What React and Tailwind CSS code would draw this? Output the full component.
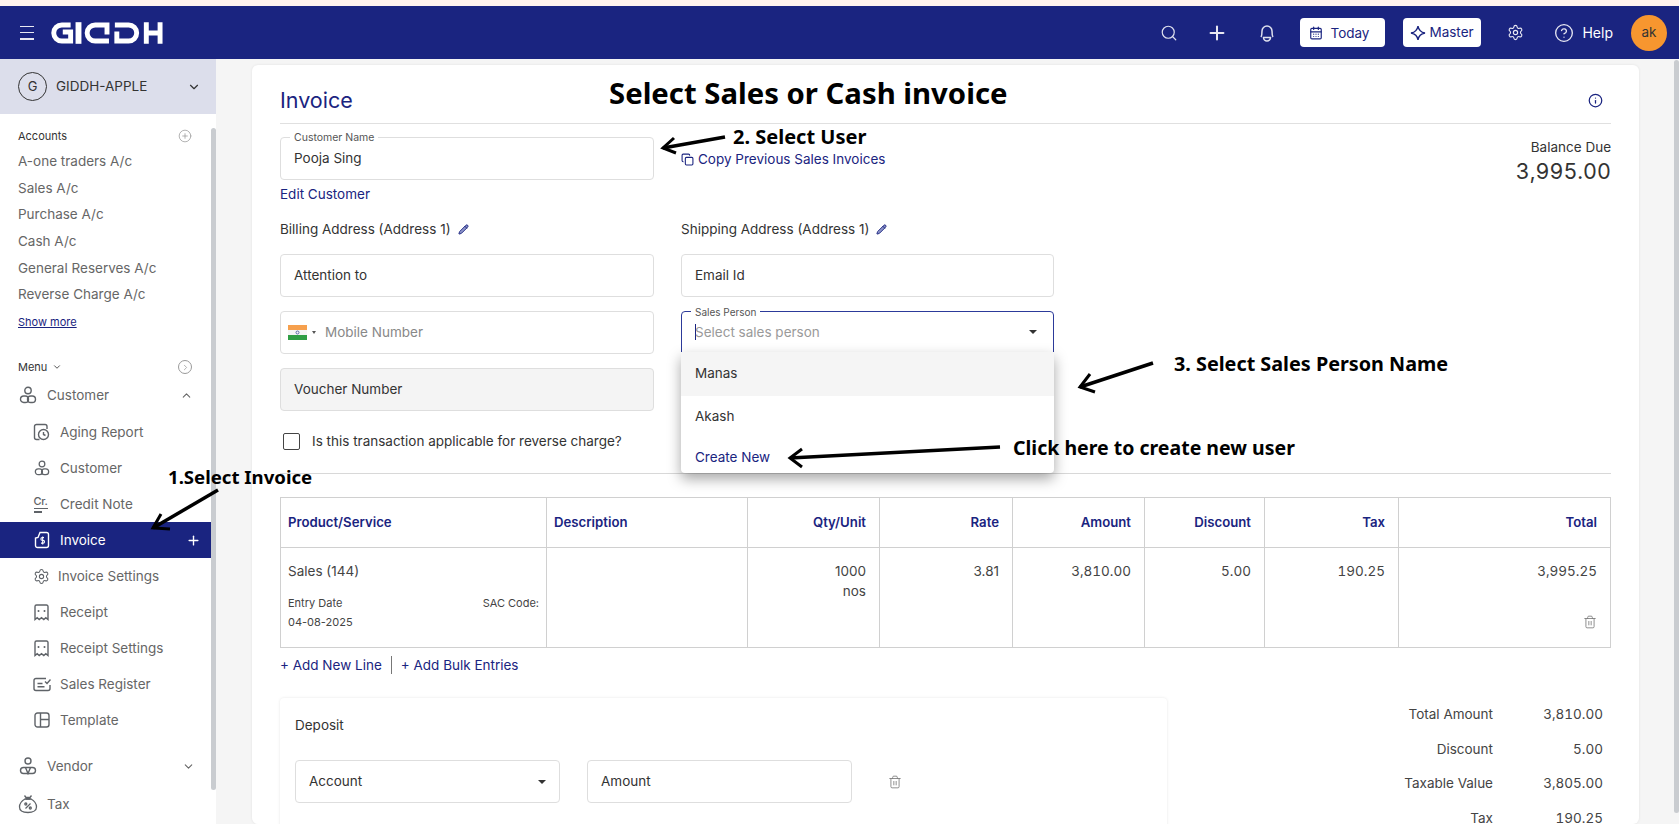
import React from 'react';
import { Search, Plus, Settings, CircleHelp, ChevronDown, ChevronUp, CirclePlus, ChevronRight, Info, Copy, Pencil, Trash2, CalendarDays } from 'lucide-react';

const accounts = ['A-one traders A/c', 'Sales A/c', 'Purchase A/c', 'Cash A/c', 'General Reserves A/c', 'Reverse Charge A/c'];

const Logo = () => (
  <svg width="114" height="24" viewBox="0 0 116 24" fill="none" stroke="#fff" strokeWidth="5">
    <path d="M21 3.800H12a8.200 8.200 0 0 0 0 16.400h9V11h-8" />
    <path d="M29 1v22" strokeWidth="6" />
    <path d="M58 13.500V3.800H46a8.200 8.200 0 0 0 0 16.400h14" />
    <path d="M68 10.500v9.700h12a8.200 8.200 0 0 0 0-16.400H66" />
    <path d="M98 1v22M112 1v22M98 12h14" />
  </svg>
);

const BellIcon = () => (
  <svg width="18" height="20" viewBox="0 0 18 20" fill="none" stroke="#dfe1ee" strokeWidth="1.500">
    <path d="M3 14c1-1.500 1-3 1-6a5 5 0 0 1 10 0c0 3 0 4.500 1 6" />
    <path d="M5.500 14.500h7a3.500 3.500 0 0 1-7 0z" />
  </svg>
);

const Sparkle = () => (
  <svg width="16" height="16" viewBox="0 0 16 16" fill="none" stroke="#1a2480" strokeWidth="1.400">
    <path d="M8 1c.6 4 2.500 6.200 7 7-4.500.8-6.400 3-7 7-.6-4-2.500-6.200-7-7 4.500-.8 6.400-3 7-7z" />
  </svg>
);

const PersonIcon = ({ size = 18 }) => (
  <svg width={size} height={size} viewBox="0 0 18 18" fill="none" stroke="#5f6368" strokeWidth="1.400">
    <circle cx="9" cy="4.500" r="3.200" />
    <rect x="1.500" y="10" width="8" height="6.500" rx="3.250" />
    <rect x="8.500" y="10" width="8" height="6.500" rx="3.250" />
  </svg>
);

const VendorIcon = () => (
  <svg width="18" height="18" viewBox="0 0 18 18" fill="none" stroke="#5f6368" strokeWidth="1.400">
    <circle cx="9" cy="4" r="3" />
    <rect x="1.500" y="10.500" width="15" height="6" rx="3" />
    <path d="M6.500 10.500 9 16.500l2.500-6" />
  </svg>
);

const TaxIcon = () => (
  <svg width="20" height="20" viewBox="0 0 20 20" fill="none" stroke="#5f6368" strokeWidth="1.300">
    <path d="M6.500 1.500 8 3.500h4l1.500-2M7.500 5h5" />
    <path d="M7 5C3.500 7 1.500 10 1.500 13c0 3.500 3.500 5.500 8.500 5.500s8.500-2 8.500-5.500c0-3-2-6-5.500-8z" />
    <path d="M7.500 14.500l5-5" />
    <circle cx="7.800" cy="10" r="1" />
    <circle cx="12.300" cy="14" r="1" />
  </svg>
);

const AgingIcon = () => (
  <svg width="17" height="18" viewBox="0 0 17 18" fill="none" stroke="#5f6368" strokeWidth="1.400">
    <path d="M10 1.500H3.500a2 2 0 0 0-2 2v11a2 2 0 0 0 2 2h3M10 1.500h2a2 2 0 0 1 2 2V6" />
    <circle cx="10.500" cy="11.500" r="5" />
    <path d="M10.500 9v2.500l2 1" />
  </svg>
);

const CreditIcon = () => (
  <div className="w-[16px] leading-none text-[#5f6368]">
    <div className="text-[11px] font-medium leading-[11px] tracking-tight">Cr.</div>
    <div className="mt-[1px] h-[1.500px] w-[14px] bg-[#5f6368]" />
    <div className="mt-[2px] h-[1.500px] w-[8px] bg-[#5f6368]" />
  </div>
);

const InvoiceIcon = () => (
  <svg width="16" height="18" viewBox="0 0 16 18" fill="none" stroke="#fff" strokeWidth="1.400">
    <path d="M6 1.500h6.500a2 2 0 0 1 2 2v11a2 2 0 0 1-2 2h-9a2 2 0 0 1-2-2V7L4 6.500z" />
    <path d="M10 6.500H8.300a1.200 1.200 0 0 0 0 2.800h.8a1.200 1.200 0 0 1 0 2.800H7M8.700 5.500v8" strokeWidth="1.100" />
  </svg>
);

const ReceiptIcon = () => (
  <svg width="15" height="17" viewBox="0 0 15 17" fill="none" stroke="#5f6368" strokeWidth="1.400">
    <path d="M1 15.500V2.500a1.500 1.500 0 0 1 1.500-1.500h10A1.500 1.500 0 0 1 14 2.500v13l-2.200-1.800-2 1.800-2.300-1.800-2.300 1.800-2-1.800z" />
    <path d="M4.500 7h.01M10.500 7h.01" strokeWidth="2" strokeLinecap="round" />
  </svg>
);

const RegisterIcon = () => (
  <svg width="18" height="15" viewBox="0 0 18 15" fill="none" stroke="#5f6368" strokeWidth="1.400">
    <path d="M13 1.500H3a2 2 0 0 0-2 2v8a2 2 0 0 0 2 2h12a2 2 0 0 0 2-2V8" />
    <path d="M4.500 6.500h5M4.500 9.800h7M12 4.500l2 2 3.500-4" />
  </svg>
);

const TemplateIcon = () => (
  <svg width="16" height="16" viewBox="0 0 16 16" fill="none" stroke="#5f6368" strokeWidth="1.400">
    <rect x="1" y="1" width="14" height="14" rx="2.500" />
    <path d="M6.500 1v14M6.500 7.500H15" />
  </svg>
);

const GearIcon = () => <Settings size={17} color="#5f6368" strokeWidth={1.500} />;

const IndiaFlag = () => (
  <svg width="19" height="15" viewBox="0 0 19 15">
    <rect width="19" height="5" fill="#f6a04d" />
    <rect y="5" width="19" height="5" fill="#f4f4f4" />
    <rect y="10" width="19" height="5" fill="#2f9e44" />
    <circle cx="9.500" cy="7.500" r="1.500" fill="none" stroke="#2a3a8f" strokeWidth="0.700" />
  </svg>
);

const Caret = () => <div className="h-0 w-0 border-x-[4px] border-t-[4px] border-x-transparent border-t-[#333]" />;

function SubItem({ icon, label, active, narrow }) {
  return (
    <div className={`flex h-[36px] items-center ${active ? 'bg-[#1a2480] text-white' : 'text-[#666]'}`}>
      <div className="flex w-[60px] shrink-0 justify-center pl-[23px]">{icon}</div>
      <span className={narrow ? '-ml-[2px]' : ''}>{label}</span>
      {active && <Plus size={15} color="#fff" strokeWidth={2.200} className="ml-auto mr-[10px] mt-[1px]" />}
    </div>
  );
}

function Sidebar() {
  return (
    <aside className="flex h-full w-[216px] shrink-0 flex-col bg-white text-[13.500px]">
      <div className="flex h-[55px] shrink-0 items-center bg-[#dcdeeb] pl-[18px] pr-[15px] text-[#333]">
        <div className="flex h-[29px] w-[29px] items-center justify-center rounded-full border border-[#333] text-[13px]">G</div>
        <span className="ml-[9px]">GIDDH-APPLE</span>
        <ChevronDown size={14} className="ml-auto" />
      </div>
      <div className="flex min-h-0 flex-1">
        <div className="w-[211px] shrink-0">
          <div className="mt-[13px] flex h-[18px] items-center justify-between pl-[18px] pr-[19px] text-[11px] text-[#333]">
            <span>Accounts</span>
            <CirclePlus size={14} color="#9a9a9a" strokeWidth={1.300} />
          </div>
          <div className="mt-[3px] pl-[18px] text-[#666]">
            {accounts.map((a) => (
              <div key={a} className="flex h-[26.600px] items-center">{a}</div>
            ))}
          </div>
          <div className="mt-[6px] pl-[18px] text-[11px] text-[#1a2480] underline">Show more</div>
          <div className="mt-[28px] flex h-[18px] items-center pl-[18px] pr-[19px] text-[11px] text-[#333]">
            <span>Menu</span>
            <ChevronDown size={10} className="ml-[5px]" />
            <div className="ml-auto flex h-[14px] w-[14px] items-center justify-center rounded-full border border-[#9a9a9a]">
              <ChevronRight size={9} color="#9a9a9a" />
            </div>
          </div>
          <div className="mt-[1px] flex h-[36px] items-center pl-[19px] pr-[18px] text-[#666]">
            <PersonIcon />
            <span className="ml-[10px]">Customer</span>
            <ChevronUp size={13} className="ml-auto" />
          </div>
          <div className="mt-[1px]">
            <SubItem icon={<AgingIcon />} label="Aging Report" />
            <SubItem icon={<PersonIcon size={16} />} label="Customer" />
            <SubItem icon={<CreditIcon />} label="Credit Note" />
            <SubItem icon={<InvoiceIcon />} label="Invoice" active />
            <SubItem icon={<GearIcon />} label="Invoice Settings" narrow />
            <SubItem icon={<ReceiptIcon />} label="Receipt" />
            <SubItem icon={<ReceiptIcon />} label="Receipt Settings" />
            <SubItem icon={<RegisterIcon />} label="Sales Register" />
            <SubItem icon={<TemplateIcon />} label="Template" />
          </div>
          <div className="mt-[10px] flex h-[36px] items-center pl-[19px] pr-[16px] text-[#666]">
            <VendorIcon />
            <span className="ml-[10px]">Vendor</span>
            <ChevronDown size={13} className="ml-auto" />
          </div>
          <div className="mt-[2px] flex h-[36px] items-center pl-[18px] text-[#666]">
            <TaxIcon />
            <span className="ml-[9px]">Tax</span>
          </div>
        </div>
        <div className="mt-[14px] h-[662px] w-[5px] rounded-full bg-[#c9ccd0]" />
      </div>
    </aside>
  );
}

function Field({ children, className = '', width = 'w-[374px]', border = 'border-[#dedede]' }) {
  return <div className={`flex h-[43px] items-center rounded border px-[13px] text-[13.500px] ${border} ${width} ${className}`}>{children}</div>;
}

function Dropdown() {
  return (
    <div className="absolute left-0 top-[41px] z-10 w-[373px] rounded-b bg-white text-[13.500px] text-[#333] shadow-[0_6px_14px_rgba(0,0,0,0.35)]">
      <div className="flex h-[44px] items-center bg-[#f5f5f5] px-[14px] pb-[2px]">Manas</div>
      <div className="flex h-[40px] items-center px-[14px]">Akash</div>
      <div className="flex h-[37px] items-center px-[14px] pt-[5px] text-[#1a2480]">Create New</div>
    </div>
  );
}

const headers = [
  ['Product/Service', 'px-[7px] text-left', 'w-[266px]'],
  ['Description', 'px-[7px] text-left', 'w-[201px]'],
  ['Qty/Unit', 'px-[13px] text-right', 'w-[132px]'],
  ['Rate', 'px-[13px] text-right', 'w-[133px]'],
  ['Amount', 'px-[13px] text-right', 'w-[132px]'],
  ['Discount', 'px-[13px] text-right', 'w-[120px]'],
  ['Tax', 'px-[13px] text-right', 'w-[134px]'],
  ['Total', 'px-[13px] text-right', 'w-[212px]'],
];

function LineTable() {
  const td = 'border border-[#d0d0d0] px-[13px] pt-[13px] align-top text-right leading-[20px]';
  return (
    <table className="mt-[23px] w-[1330px] table-fixed border-collapse border border-[#d0d0d0] text-[13.500px] text-[#444]">
      <thead>
        <tr className="h-[50px]">
          {headers.map(([h, cell, w]) => (
            <th key={h} className={`border border-[#d0d0d0] text-[13.200px] font-semibold text-[#1a2480] ${cell} ${w}`}>{h}</th>
          ))}
        </tr>
      </thead>
      <tbody>
        <tr className="h-[100px]">
          <td className="border border-[#d0d0d0] px-[7px] pt-[13px] align-top leading-[20px]">
            <div>Sales (144)</div>
            <div className="mt-[13px] flex justify-between text-[11px] leading-[19px]">
              <div>
                <div>Entry Date</div>
                <div>04-08-2025</div>
              </div>
              <div>SAC Code:</div>
            </div>
          </td>
          <td className="border border-[#d0d0d0]" />
          <td className={td}>
            <div>1000</div>
            <div>nos</div>
          </td>
          <td className={td}>3.81</td>
          <td className={`${td} tabular-nums`}>3,810.00</td>
          <td className={`${td} tabular-nums`}>5.00</td>
          <td className={`${td} tabular-nums`}>190.25</td>
          <td className={td}>
            <div className="tabular-nums">3,995.25</div>
            <div className="mt-[34px] flex justify-end">
              <Trash2 size={14} color="#777" strokeWidth={1.400} />
            </div>
          </td>
        </tr>
      </tbody>
    </table>
  );
}

const totals = [
  ['Total Amount', '3,810.00'],
  ['Discount', '5.00'],
  ['Taxable Value', '3,805.00'],
  ['Tax', '190.25'],
];

function InvoiceCard() {
  return (
    <div className="w-[1387px] shrink-0 rounded-md bg-white px-[28px] text-[13.500px] text-[#333] shadow-[0_0_3px_rgba(0,0,0,0.08)]">
      <div className="flex h-[59px] items-center justify-between border-b border-[#e0e0e0] pt-[12px]">
        <h1 className="text-[21.500px] text-[#1a2480]">Invoice</h1>
        <Info size={15} color="#1a2480" className="mr-[8px]" />
      </div>
      <div className="mt-[13px] flex h-[43px] items-start">
        <Field className="relative">
          <span className="absolute -top-[6px] left-[9px] bg-white px-[4px] text-[10.500px] leading-[12px] text-[#555]">Customer Name</span>
          Pooja Sing
        </Field>
        <div className="ml-[27px] mt-[12px] flex items-center text-[#1a2480]">
          <Copy size={13} className="mr-[4px]" />
          Copy Previous Sales Invoices
        </div>
        <div className="ml-auto pt-[1px] text-right">
          <div className="leading-[18px]">Balance Due</div>
          <div className="text-[21.500px] leading-[30px] tabular-nums">3,995.00</div>
        </div>
      </div>
      <div className="mt-[4px] flex h-[20px] items-center text-[#1a2480]">Edit Customer</div>
      <div className="mt-[15px] flex h-[20px] items-center">
        <div className="flex w-[374px] items-center">
          Billing Address (Address 1)
          <Pencil size={11} color="#1a2480" fill="#8c93c8" className="ml-[7px]" />
        </div>
        <div className="ml-[27px] flex items-center">
          Shipping Address (Address 1)
          <Pencil size={11} color="#1a2480" fill="#8c93c8" className="ml-[7px]" />
        </div>
      </div>
      <div className="mt-[15px] flex">
        <div className="flex w-[374px] flex-col gap-[14px]">
          <Field>Attention to</Field>
          <Field className="pl-[7px] text-[#888]">
            <IndiaFlag />
            <div className="ml-[5px] mr-[9px] h-0 w-0 border-x-[2.500px] border-t-[3px] border-x-transparent border-t-[#555]" />
            Mobile Number
          </Field>
          <Field className="bg-[#f4f4f4]">Voucher Number</Field>
        </div>
        <div className="ml-[27px] flex w-[373px] flex-col gap-[14px]">
          <Field width="w-[373px]">Email Id</Field>
          <div className="relative">
            <Field width="w-[373px]" border="border-[#2c3a9a]" className="relative rounded-b-none pb-[1px] text-[#9a9a9a]">
              <span className="absolute -top-[6px] left-[9px] bg-white px-[4px] text-[10px] leading-[12px] text-[#555]">Sales Person</span>
              <div className="-mr-px h-[16px] w-px bg-[#1a2480]" />
              Select sales person
              <div className="ml-auto mr-[3px]"><Caret /></div>
            </Field>
            <Dropdown />
          </div>
        </div>
      </div>
      <div className="mt-[22px] flex h-[17px] items-center">
        <div className="ml-[3px] h-[17px] w-[17px] rounded-[2px] border border-[#444]" />
        <span className="ml-[12px]">Is this transaction applicable for reverse charge?</span>
      </div>
      <div className="mt-[23px] h-px bg-[#d8d8d8]" />
      <LineTable />
      <div className="mt-[7px] flex h-[20px] items-center text-[#1a2480]">
        <span>+ Add New Line</span>
        <div className="ml-[9px] mr-[9px] h-[18px] w-px bg-[#777]" />
        <span>+ Add Bulk Entries</span>
      </div>
      <div className="mt-[23px] flex justify-between">
        <div className="h-[300px] w-[887px] rounded bg-white px-[15px] shadow-[0_0_3px_rgba(0,0,0,0.1)]">
          <div className="flex h-[55px] items-center">Deposit</div>
          <div className="mt-[7px] flex items-center">
            <Field width="w-[265px]" className="justify-between">
              Account
              <Caret />
            </Field>
            <Field width="w-[265px]" className="ml-[27px]">Amount</Field>
            <Trash2 size={14} color="#777" strokeWidth={1.400} className="ml-[36px]" />
          </div>
        </div>
        <div className="-mt-[1px] w-[323px] pr-[8px] text-[#444]">
          {totals.map(([label, value]) => (
            <div key={label} className="flex h-[34.500px] items-center">
              <span className="flex-1 text-right">{label}</span>
              <span className="w-[110px] text-right tabular-nums">{value}</span>
            </div>
          ))}
        </div>
      </div>
    </div>
  );
}

function Annotations() {
  const label = "absolute z-20 whitespace-nowrap font-['Noto_Sans',sans-serif] font-bold leading-none text-black";
  const arrows = [
    ['M725 137 L663 148', 'M674 138 L663 148 L676 153'],
    ['M1153 363 L1080 387', 'M1090 374 L1080 387 L1095 392'],
    ['M1000 447 L790 458', 'M802 449 L790 458 L802 467'],
    ['M218 490 L153 528', 'M161 514 L153 528 L170 529'],
  ];
  return (
    <>
      <div className={`${label} left-[609px] top-[79px] text-[29.300px]`}>Select Sales or Cash invoice</div>
      <div className={`${label} left-[733px] top-[127px] text-[20px]`}>2. Select User</div>
      <div className={`${label} left-[1174px] top-[354px] text-[19.800px]`}>3. Select Sales Person Name</div>
      <div className={`${label} left-[1013px] top-[438px] text-[19.500px]`}>Click here to create new user</div>
      <div className={`${label} left-[168px] top-[468px] text-[18.600px]`}>1.Select Invoice</div>
      <svg className="pointer-events-none absolute left-0 top-0 z-20" width="1679" height="824" fill="none" stroke="#000" strokeWidth="3.500">
        {arrows.map(([line, head]) => (
          <g key={line}>
            <path d={line} />
            <path d={head} strokeWidth="3" />
          </g>
        ))}
      </svg>
    </>
  );
}

export default function App() {
  return (
    <div className="relative flex h-[824px] w-[1679px] flex-col overflow-hidden bg-[#f5f5f5] font-['Inter',sans-serif]">
      <div className="h-[6px] shrink-0 bg-[#fff3ee]" />
      <header className="flex h-[53px] shrink-0 items-center bg-[#1a2480] pr-[12px] text-[13.500px] text-white">
        <div className="ml-[20px] flex h-[14px] w-[14px] flex-col justify-between">
          <div className="h-[1.500px] bg-[#e8e8f2]" />
          <div className="h-[1.500px] bg-[#e8e8f2]" />
          <div className="h-[1.500px] bg-[#e8e8f2]" />
        </div>
        <div className="ml-[16px]"><Logo /></div>
        <Search size={18} color="#dfe1ee" strokeWidth={1.600} className="ml-auto" />
        <Plus size={22} color="#e8e8f2" strokeWidth={2.200} className="ml-[28px]" />
        <div className="ml-[30px]"><BellIcon /></div>
        <div className="ml-[24px] flex h-[29px] w-[85px] items-center rounded bg-white pl-[9px] text-[#1a2480]">
          <CalendarDays size={14} />
          <span className="ml-[7px] pt-[1px]">Today</span>
        </div>
        <div className="ml-[18px] flex h-[29px] w-[78px] items-center rounded bg-white pl-[7px] text-[#1a2480]">
          <Sparkle />
          <span className="ml-[3px]">Master</span>
        </div>
        <Settings size={17} color="#e8e8f2" strokeWidth={1.600} className="ml-[26px]" />
        <CircleHelp size={20} color="#e8e8f2" strokeWidth={1.600} className="ml-[30px]" />
        <span className="ml-[8px] text-[14px]">Help</span>
        <div className="ml-[18px] flex h-[36px] w-[36px] items-center justify-center rounded-full bg-[#f7962f] text-[#333]">ak</div>
      </header>
      <div className="flex min-h-0 flex-1">
        <Sidebar />
        <main className="flex min-w-0 flex-1 overflow-hidden pl-[36px] pt-[6px]">
          <InvoiceCard />
          <div className="-mt-[5px] ml-[35px] h-[753px] w-[5px] rounded-full bg-[#c9ccd0]" />
        </main>
      </div>
      <Annotations />
    </div>
  );
}
